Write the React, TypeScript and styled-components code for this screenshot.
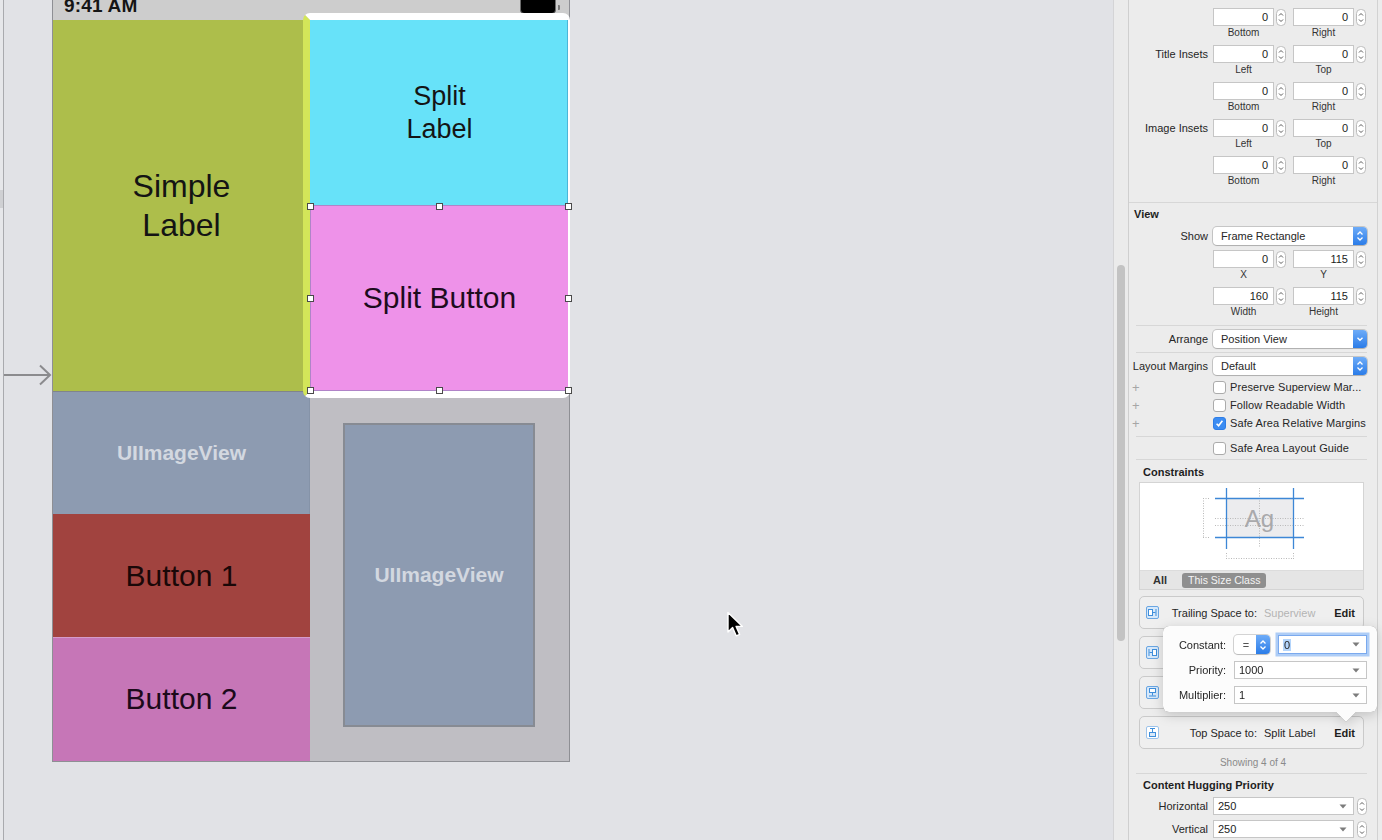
import React from "react";
import styled, { createGlobalStyle } from "styled-components";

const GlobalStyle = createGlobalStyle`
  html, body { margin: 0; padding: 0; background: #e1e2e6; overflow: hidden; }
  body { font-family: "Liberation Sans", Arial, Helvetica, sans-serif; }
  * { box-sizing: border-box; }
`;

const Screen = styled.div`
  display: flex;
  width: 1382px;
  height: 840px;
  background: #e1e2e6;
  overflow: hidden;
`;

/* ---------------- canvas ---------------- */
const Canvas = styled.div`
  position: relative;
  display: flex;
  flex: none;
  width: 1113px;
  height: 100%;
`;
const Gutter = styled.div`
  width: 4px;
  border-right: 1px solid #a9aaae;
  background: #e6e7ea;
  display: flex;
  flex-direction: column;
`;
const GutterStub = styled.div`
  margin-top: 190px;
  height: 18px;
  background: #cfd0d3;
`;
const CanvasBody = styled.div`
  flex: 1;
  padding-left: 48px;
`;
const Phone = styled.div`
  position: relative;
  width: 518px;
  border: 1px solid #8e8f94;
  border-top: none;
`;
const StatusBar = styled.div`
  height: 20px;
  background: #cdcdcd;
  display: flex;
  justify-content: space-between;
  align-items: flex-start;
  padding: 0 9px 0 11px;
  overflow: hidden;
`;
const Clock = styled.span`
  font-size: 19px;
  font-weight: 700;
  line-height: 19px;
  margin-top: -4px;
  color: #151515;
  letter-spacing: 0.2px;
`;
const BatteryWrap = styled.div`
  display: flex;
  align-items: center;
  gap: 2px;
  margin-top: -4px;
`;
const BatteryBody = styled.div`
  width: 36px;
  height: 18px;
  border-radius: 4px;
  background: #000;
  border: 1px solid #6d6d6d;
`;
const BatteryNub = styled.div`
  width: 2px;
  height: 5px;
  margin-top: 4px;
  border-radius: 0 1px 1px 0;
  background: #777;
`;
const Board = styled.div`
  display: grid;
  grid-template-columns: 257px 259px;
  height: 741px;
`;
const Column = styled.div<{ $rows: string }>`
  display: grid;
  grid-template-rows: ${(p) => p.$rows};
  min-height: 0;
`;
const Block = styled.div<{ $bg: string; $size: number; $color?: string; $bold?: boolean; $edge?: string }>`
  position: relative;
  display: flex;
  align-items: center;
  justify-content: center;
  text-align: center;
  background: ${(p) => p.$bg};
  color: ${(p) => p.$color ?? "#141414"};
  font-size: ${(p) => p.$size}px;
  font-weight: ${(p) => (p.$bold ? 700 : 400)};
  line-height: 1.2;
  box-shadow: ${(p) => p.$edge ?? "none"};
`;
const ImageWell = styled.div`
  display: flex;
  background: #bfbec3;
  padding: 32px 34px 34px 33px;
`;
const ImageBox = styled(Block)`
  flex: 1;
  border: 2px solid #878b93;
`;
const SelectionFrame = styled.div`
  position: absolute;
  left: 250px;
  top: 13px;
  width: 267px;
  height: 385px;
  border: 7px solid #ffffff;
  border-left-color: #d3e659;
  border-right-width: 2px;
  border-radius: 7px;
  z-index: 2;
  pointer-events: none;
`;
const Handle = styled.span<{ $x: number; $y: number }>`
  position: absolute;
  z-index: 3;
  width: 7px;
  height: 7px;
  background: #fff;
  border: 1px solid #4a4a4a;
  left: ${(p) => p.$x - 3.5}px;
  top: ${(p) => p.$y - 3.5}px;
`;
const EntryArrow = styled.svg`
  position: absolute;
  left: -49px;
  top: 364px;
`;
const Cursor = styled.svg`
  position: absolute;
  left: 726px;
  top: 611px;
`;

/* ---------------- inspector ---------------- */
const Inspector = styled.div`
  display: flex;
  flex: 1;
  background: #ececec;
`;
const ScrollTrack = styled.div`
  width: 15px;
  border-left: 1px solid #d4d4d6;
  background: #ebebeb;
  display: flex;
  justify-content: center;
`;
const Thumb = styled.div`
  margin-top: 265px;
  width: 8px;
  height: 376px;
  border-radius: 4px;
  background: #c3c3c3;
`;
const Panel = styled.div`
  position: relative;
  width: 250px;
  border-left: 1px solid #cfcfcf;
  border-right: 1px solid #d2d2d2;
  background: #ececec;
  font-size: 11px;
  color: #262626;
`;
const Section = styled.div<{ $pt?: number; $pb?: number }>`
  padding-top: ${(p) => p.$pt ?? 0}px;
  padding-bottom: ${(p) => p.$pb ?? 0}px;
`;
const Rule = styled.div<{ $mt?: number }>`
  height: 1px;
  margin-top: ${(p) => p.$mt ?? 0}px;
  background: #d7d7d7;
`;
const InsetRule = styled(Rule)`
  margin-left: 7px;
  margin-right: 10px;
`;
const Header = styled.div<{ $mt?: number; $pl: number }>`
  margin-top: ${(p) => p.$mt ?? 0}px;
  padding-left: ${(p) => p.$pl}px;
  font-weight: 700;
  line-height: 14px;
  color: #1e1e1e;
`;
const FormRow = styled.div<{ $mt?: number }>`
  display: grid;
  grid-template-columns: 79px 154px;
  column-gap: 5px;
  align-items: start;
  margin-top: ${(p) => p.$mt ?? 0}px;
`;
const RowLabel = styled.div`
  text-align: right;
  line-height: 18px;
  height: 18px;
  white-space: nowrap;
`;
const Pair = styled.div`
  display: grid;
  grid-template-columns: 74px 74px;
  column-gap: 6px;
`;
const NumCell = styled.div`
  display: flex;
  flex-direction: column;
`;
const NumLine = styled.div`
  display: flex;
  align-items: center;
  gap: 2px;
`;
const NumField = styled.div`
  width: 61px;
  height: 18px;
  background: #fff;
  border: 1px solid #c6c6c6;
  text-align: right;
  padding-right: 5px;
  line-height: 16px;
  color: #1c1c1c;
`;
const SubLabel = styled.div`
  width: 61px;
  text-align: center;
  font-size: 10px;
  line-height: 13px;
  margin-bottom: 6px;
  color: #333;
`;
const Popup = styled.div<{ $w: number; $h?: number }>`
  display: flex;
  align-items: center;
  width: ${(p) => p.$w}px;
  height: ${(p) => p.$h ?? 18}px;
  background: #fff;
  border-radius: 4px;
  box-shadow: 0 0 0 1px rgba(0, 0, 0, 0.16), 0 1px 1px rgba(0, 0, 0, 0.12);
  padding-left: 8px;
  overflow: hidden;
  white-space: nowrap;
`;
const PopupCap = styled.div`
  margin-left: auto;
  width: 14px;
  height: 100%;
  background: linear-gradient(#6eacf8, #2b7ce8);
  display: flex;
  align-items: center;
  justify-content: center;
`;
const Combo = styled.div<{ $w: number; $h?: number }>`
  display: flex;
  align-items: center;
  width: ${(p) => p.$w}px;
  height: ${(p) => p.$h ?? 18}px;
  background: #fff;
  border: 1px solid #c6c6c6;
  padding: 0 6px 0 4px;
  white-space: nowrap;
  color: #1c1c1c;
`;
const ComboText = styled.span`
  flex: 1;
`;
const ComboLine = styled.div`
  display: flex;
  align-items: center;
  gap: 3px;
`;
const CheckRow = styled.div<{ $mt?: number }>`
  display: grid;
  grid-template-columns: 79px 13px auto;
  column-gap: 5px;
  align-items: center;
  height: 18px;
  margin-top: ${(p) => p.$mt ?? 0}px;
`;
const Plus = styled.span`
  padding-left: 3px;
  color: #a6a6a6;
  font-size: 13px;
`;
const CheckText = styled.span`
  margin-left: -1px;
  white-space: nowrap;
  letter-spacing: 0.1px;
`;
const Check = styled.span<{ $on?: boolean }>`
  width: 13px;
  height: 13px;
  border-radius: 3px;
  background: ${(p) => (p.$on ? "#3b8cf2" : "#fff")};
  border: 1px solid ${(p) => (p.$on ? "#2e7de6" : "#ababab")};
  display: inline-flex;
  align-items: center;
  justify-content: center;
`;
const DiagramCard = styled.div`
  margin: 3px 0 0 10px;
  width: 225px;
  border: 1px solid #d4d4d4;
  background: #fff;
`;
const DiagramArea = styled.div`
  height: 87px;
`;
const TabBar = styled.div`
  display: flex;
  align-items: center;
  gap: 15px;
  height: 19px;
  padding-left: 13px;
  background: #e5e5e5;
  border-top: 1px solid #dcdcdc;
`;
const TabAll = styled.span`
  font-weight: 700;
  font-size: 11px;
  color: #333;
`;
const TabPill = styled.span`
  padding: 1px 6px;
  border-radius: 3px;
  background: #8f8f8f;
  color: #f4f4f4;
  font-size: 10.5px;
  line-height: 13px;
`;
const ConstraintList = styled.div`
  display: flex;
  flex-direction: column;
  gap: 7px;
  margin: 6px 0 0 10px;
  width: 225px;
`;
const ConstraintRow = styled.div`
  display: grid;
  grid-template-columns: 13px 91px 1fr auto;
  column-gap: 7px;
  align-items: center;
  height: 33px;
  padding: 0 8px 0 6px;
  border: 1px solid #cacaca;
  border-radius: 5px;
  background: #efefef;
`;
const CLabel = styled.span`
  text-align: right;
  white-space: nowrap;
`;
const CValue = styled.span<{ $muted?: boolean }>`
  white-space: nowrap;
  color: ${(p) => (p.$muted ? "#b4b4b4" : "#262626")};
`;
const EditText = styled.span`
  font-weight: 700;
  color: #1e1e1e;
`;
const Showing = styled.div`
  margin-top: 7px;
  line-height: 14px;
  text-align: center;
  font-size: 10px;
  color: #8a8a8a;
`;
const Popover = styled.div`
  position: absolute;
  left: 34px;
  top: 626px;
  width: 214px;
  height: 86px;
  z-index: 5;
  display: flex;
  flex-direction: column;
  gap: 7px;
  padding: 9px 10px 0 7px;
  background: #fcfcfc;
  border-radius: 6px;
  filter: drop-shadow(0 0 0.6px rgba(0, 0, 0, 0.45)) drop-shadow(0 3px 6px rgba(0, 0, 0, 0.18));
  &::after {
    content: "";
    position: absolute;
    left: 173px;
    bottom: -10px;
    border-left: 10px solid transparent;
    border-right: 10px solid transparent;
    border-top: 10px solid #fcfcfc;
  }
`;
const PopRow = styled.div<{ $h: number }>`
  display: grid;
  grid-template-columns: 56px auto;
  column-gap: 8px;
  align-items: center;
  height: ${(p) => p.$h}px;
`;
const PopLabel = styled.span`
  text-align: right;
  white-space: nowrap;
  font-size: 11px;
`;
const PopControls = styled.div`
  display: flex;
  align-items: center;
  gap: 8px;
`;
const EqText = styled.span`
  flex: 1;
  text-align: center;
  margin-left: -6px;
  color: #555;
`;
const FocusField = styled.div`
  display: flex;
  align-items: center;
  width: 89px;
  height: 19px;
  background: #fff;
  border: 1px solid #7aa9ee;
  box-shadow: 0 0 0 2.5px rgba(110, 165, 240, 0.55);
  padding: 0 6px 0 4px;
`;
const Selected = styled.span`
  background: #b4d5fc;
  padding: 0 1px;
  line-height: 14px;
`;

/* ---------------- drawings ---------------- */
const Stepper = () => (
  <svg width="10" height="17" viewBox="0 0 10 17">
    <rect x="0.5" y="0.5" width="9" height="16" rx="4" fill="#fff" stroke="#bcbcbc" />
    <path d="M3 6.5l2-2 2 2M3 10.5l2 2 2-2" fill="none" stroke="#5a5a5a" strokeWidth="1" />
  </svg>
);
const UpDown = () => (
  <svg width="8" height="12" viewBox="0 0 8 12">
    <path d="M1.5 4.5L4 2l2.5 2.5M1.5 7.5L4 10l2.5-2.5" fill="none" stroke="#fff" strokeWidth="1.3" />
  </svg>
);
const Down = () => (
  <svg width="8" height="8" viewBox="0 0 8 8">
    <path d="M1.5 2.8L4 5.3l2.5-2.5" fill="none" stroke="#fff" strokeWidth="1.4" />
  </svg>
);
const Tri = () => (
  <svg width="8" height="5" viewBox="0 0 8 5">
    <path d="M0.5 0.5h7L4 4.5z" fill="#7c7c7c" />
  </svg>
);
const Tick = () => (
  <svg width="9" height="9" viewBox="0 0 9 9">
    <path d="M1.6 4.8l2 2 3.8-5" fill="none" stroke="#fff" strokeWidth="1.6" />
  </svg>
);

const NumBox = ({ value, label }: { value: string; label: string }) => (
  <NumCell>
    <NumLine>
      <NumField>{value}</NumField>
      <Stepper />
    </NumLine>
    <SubLabel>{label}</SubLabel>
  </NumCell>
);

const InsetRow = ({ label, a, b }: { label?: string; a: string; b: string }) => (
  <FormRow>
    <RowLabel>{label}</RowLabel>
    <Pair>
      <NumBox value="0" label={a} />
      <NumBox value="0" label={b} />
    </Pair>
  </FormRow>
);

const CIcon = ({ kind }: { kind: "trail" | "lead" | "bottom" | "top" }) => {
  const blue = "#3f8fdc";
  if (kind === "top")
    return (
      <svg width="13" height="13" viewBox="0 0 13 13">
        <rect x="0.5" y="0.5" width="12" height="12" rx="1.5" fill="#fff" stroke="#9dc3ea" />
        <path d="M4 2.5h5M6.5 2.5v4" stroke={blue} strokeWidth="1" fill="none" />
        <rect x="3.5" y="6.5" width="6" height="4" fill="#d8e9fa" stroke={blue} />
      </svg>
    );
  const inner =
    kind === "trail" ? (
      <>
        <rect x="2.5" y="3.5" width="4" height="6" fill="#fff" stroke={blue} />
        <path d="M10 3v7M7 6.5h2.5" stroke={blue} fill="none" />
      </>
    ) : kind === "lead" ? (
      <>
        <rect x="6.5" y="3.5" width="4" height="6" fill="#fff" stroke={blue} />
        <path d="M3 3v7M3.5 6.5H6" stroke={blue} fill="none" />
      </>
    ) : (
      <>
        <rect x="3.5" y="2.5" width="6" height="4" fill="#fff" stroke={blue} />
        <path d="M3 10h7M6.5 7v2.5" stroke={blue} fill="none" />
      </>
    );
  return (
    <svg width="13" height="13" viewBox="0 0 13 13">
      <rect x="0.5" y="0.5" width="12" height="12" rx="1.5" fill="#d6e8fa" stroke="#6aa6e2" />
      {inner}
    </svg>
  );
};

const Diagram = () => (
  <svg width="223" height="87" viewBox="0 0 223 87">
    <rect x="86" y="15" width="68" height="40" fill="#ececee" />
    <g stroke="#b9b9b9" strokeWidth="1" strokeDasharray="1 1.5" fill="none">
      <path d="M119.5 5v60" />
      <path d="M75 35.5h89M75 42.5h89" />
      <path d="M63.5 15v40M63 15.5h6M63 54.5h6" />
      <path d="M86 75.5h68M86.5 70v6M153.5 70v6" />
    </g>
    <text x="119.5" y="44" textAnchor="middle" fontFamily="Liberation Sans, Arial, sans-serif" fontSize="24" fill="#a9a9ab">
      Ag
    </text>
    <g stroke="#3d87d6" strokeWidth="1.3" fill="none">
      <path d="M75 15.5h89M75 54.5h89" />
      <path d="M86.5 5v61M153.5 5v61" />
    </g>
  </svg>
);

export default function App() {
  return (
    <Screen>
      <GlobalStyle />
      <Canvas>
        <Gutter>
          <GutterStub />
        </Gutter>
        <CanvasBody>
          <Phone>
            <StatusBar>
              <Clock>9:41 AM</Clock>
              <BatteryWrap>
                <BatteryBody />
                <BatteryNub />
              </BatteryWrap>
            </StatusBar>
            <Board>
              <Column $rows="371px 123px 123px 124px">
                <Block $bg="#adbe4b" $size={32}>
                  Simple
                  <br />
                  Label
                </Block>
                <Block $bg="#8d9bb1" $size={21} $bold $color="#d3d8e0" $edge="inset 0 1px 0 #80848c, inset -1px 0 0 #8593a8">
                  UIImageView
                </Block>
                <Block $bg="#a1433f" $size={30} $color="#1a0808">
                  Button 1
                </Block>
                <Block $bg="#c676b7" $size={30} $color="#1c0a1a" $edge="inset 0 1px 0 #d59ccb">
                  Button 2
                </Block>
              </Column>
              <Column $rows="185px 186px 370px">
                <Block $bg="#67e2f9" $size={27} $edge="inset -2px 0 0 #4cb6d8">
                  Split
                  <br />
                  Label
                </Block>
                <Block $bg="#ee92e9" $size={30} $color="#1d0c1d" $edge="inset 0 0 0 1px #b084c8">
                  Split Button
                  <Handle $x={0} $y={1} />
                  <Handle $x={129} $y={1} />
                  <Handle $x={258} $y={1} />
                  <Handle $x={0} $y={93} />
                  <Handle $x={258} $y={93} />
                  <Handle $x={0} $y={185} />
                  <Handle $x={129} $y={185} />
                  <Handle $x={258} $y={185} />
                </Block>
                <ImageWell>
                  <ImageBox $bg="#8d9bb1" $size={21} $bold $color="#d3d8e0">
                    UIImageView
                  </ImageBox>
                </ImageWell>
              </Column>
            </Board>
            <SelectionFrame />
            <EntryArrow width="48" height="22" viewBox="0 0 48 22">
              <path d="M0 11h46M36 1.5L46 11 36 20.5" fill="none" stroke="#8b8b8e" strokeWidth="2" />
            </EntryArrow>
          </Phone>
        </CanvasBody>
        <Cursor width="18" height="28" viewBox="0 0 18 28">
          <path
            d="M2 1.5V21l4.6-4.4 3.6 8.2 3.4-1.4-3.5-8h6.3z"
            fill="#000"
            stroke="#fff"
            strokeWidth="1.4"
            strokeLinejoin="round"
          />
        </Cursor>
      </Canvas>

      <Inspector>
        <ScrollTrack>
          <Thumb />
        </ScrollTrack>
        <Panel>
          <Section $pt={8} $pb={9}>
            <InsetRow a="Bottom" b="Right" />
            <InsetRow label="Title Insets" a="Left" b="Top" />
            <InsetRow a="Bottom" b="Right" />
            <InsetRow label="Image Insets" a="Left" b="Top" />
            <InsetRow a="Bottom" b="Right" />
          </Section>
          <Rule />
          <Header $mt={4} $pl={5}>
            View
          </Header>
          <FormRow $mt={6}>
            <RowLabel>Show</RowLabel>
            <Popup $w={154}>
              Frame Rectangle
              <PopupCap>
                <UpDown />
              </PopupCap>
            </Popup>
          </FormRow>
          <FormRow $mt={5}>
            <RowLabel />
            <Pair>
              <NumBox value="0" label="X" />
              <NumBox value="115" label="Y" />
            </Pair>
          </FormRow>
          <FormRow>
            <RowLabel />
            <Pair>
              <NumBox value="160" label="Width" />
              <NumBox value="115" label="Height" />
            </Pair>
          </FormRow>
          <InsetRule $mt={1} />
          <FormRow $mt={4}>
            <RowLabel>Arrange</RowLabel>
            <Popup $w={154}>
              Position View
              <PopupCap>
                <Down />
              </PopupCap>
            </Popup>
          </FormRow>
          <InsetRule $mt={4} />
          <FormRow $mt={4}>
            <RowLabel>Layout Margins</RowLabel>
            <Popup $w={154}>
              Default
              <PopupCap>
                <UpDown />
              </PopupCap>
            </Popup>
          </FormRow>
          <CheckRow $mt={3}>
            <Plus>+</Plus>
            <Check />
            <CheckText>Preserve Superview Mar...</CheckText>
          </CheckRow>
          <CheckRow>
            <Plus>+</Plus>
            <Check />
            <CheckText>Follow Readable Width</CheckText>
          </CheckRow>
          <CheckRow>
            <Plus>+</Plus>
            <Check $on>
              <Tick />
            </Check>
            <CheckText>Safe Area Relative Margins</CheckText>
          </CheckRow>
          <InsetRule $mt={4} />
          <CheckRow $mt={2}>
            <span />
            <Check />
            <CheckText>Safe Area Layout Guide</CheckText>
          </CheckRow>
          <InsetRule $mt={2} />
          <Header $mt={5} $pl={14}>
            Constraints
          </Header>
          <DiagramCard>
            <DiagramArea>
              <Diagram />
            </DiagramArea>
            <TabBar>
              <TabAll>All</TabAll>
              <TabPill>This Size Class</TabPill>
            </TabBar>
          </DiagramCard>
          <ConstraintList>
            <ConstraintRow>
              <CIcon kind="trail" />
              <CLabel>Trailing Space to:</CLabel>
              <CValue $muted>Superview</CValue>
              <EditText>Edit</EditText>
            </ConstraintRow>
            <ConstraintRow>
              <CIcon kind="lead" />
            </ConstraintRow>
            <ConstraintRow>
              <CIcon kind="bottom" />
            </ConstraintRow>
            <ConstraintRow>
              <CIcon kind="top" />
              <CLabel>Top Space to:</CLabel>
              <CValue>Split Label</CValue>
              <EditText>Edit</EditText>
            </ConstraintRow>
          </ConstraintList>
          <Showing>Showing 4 of 4</Showing>
          <InsetRule $mt={3} />
          <Header $mt={4} $pl={14}>
            Content Hugging Priority
          </Header>
          <FormRow $mt={5}>
            <RowLabel>Horizontal</RowLabel>
            <ComboLine>
              <Combo $w={141}>
                <ComboText>250</ComboText>
                <Tri />
              </Combo>
              <Stepper />
            </ComboLine>
          </FormRow>
          <FormRow $mt={5}>
            <RowLabel>Vertical</RowLabel>
            <ComboLine>
              <Combo $w={141}>
                <ComboText>250</ComboText>
                <Tri />
              </Combo>
              <Stepper />
            </ComboLine>
          </FormRow>

          <Popover>
            <PopRow $h={19}>
              <PopLabel>Constant:</PopLabel>
              <PopControls>
                <Popup $w={36} $h={19}>
                  <EqText>=</EqText>
                  <PopupCap>
                    <UpDown />
                  </PopupCap>
                </Popup>
                <FocusField>
                  <ComboText>
                    <Selected>0</Selected>
                  </ComboText>
                  <Tri />
                </FocusField>
              </PopControls>
            </PopRow>
            <PopRow $h={18}>
              <PopLabel>Priority:</PopLabel>
              <Combo $w={133}>
                <ComboText>1000</ComboText>
                <Tri />
              </Combo>
            </PopRow>
            <PopRow $h={18}>
              <PopLabel>Multiplier:</PopLabel>
              <Combo $w={133}>
                <ComboText>1</ComboText>
                <Tri />
              </Combo>
            </PopRow>
          </Popover>
        </Panel>
      </Inspector>
    </Screen>
  );
}
